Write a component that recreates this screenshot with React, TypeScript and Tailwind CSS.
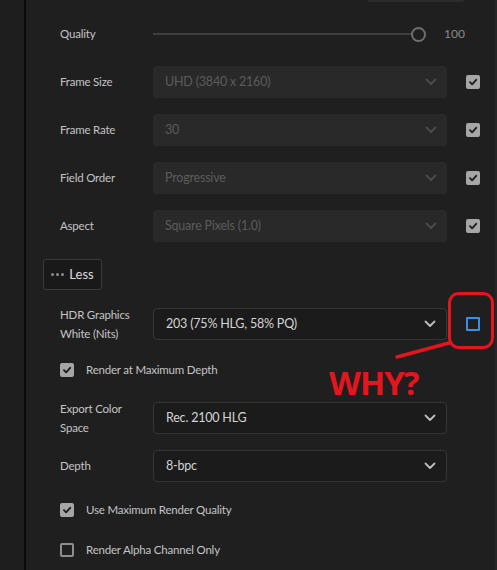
import React from 'react';

const font = { fontFamily: 'Lato, "Noto Sans", sans-serif' };

function Chevron({ enabled }: { enabled?: boolean }) {
  return (
    <svg width="12" height="8" viewBox="0 0 12 8" className="shrink-0">
      <path
        d="M1.5 1.5 L6 6 L10.5 1.5"
        fill="none"
        stroke={enabled ? '#bdbdbd' : '#4c4c4c'}
        strokeWidth="1.8"
        strokeLinecap="round"
        strokeLinejoin="round"
      />
    </svg>
  );
}

function CheckBox({ checked }: { checked: boolean }) {
  if (!checked) {
    return <div className="w-[14px] h-[14px] rounded-[2px] border-2 border-[#8e8e8e] shrink-0" />;
  }
  return (
    <div className="w-[14px] h-[14px] rounded-[2px] bg-[#a6a6a6] flex items-center justify-center shrink-0">
      <svg width="10" height="10" viewBox="0 0 10 10">
        <path d="M2 5.2 L4.1 7.3 L8.2 2.8" fill="none" stroke="#1e1e1e" strokeWidth="1.9" strokeLinecap="round" strokeLinejoin="round" />
      </svg>
    </div>
  );
}

// greyed-out selects of the top block, each with its "match source" box
function DisabledRow({ label, value }: { label: string; value: string }) {
  return (
    <div className="flex items-center h-8 pl-[17px]">
      <div className="w-[93px] text-[11.5px] tracking-[-0.2px] text-[#c4c4c4]">{label}</div>
      <div className="w-[294px] h-8 rounded-[4px] bg-[#292929] flex items-center justify-between pl-3 pr-[10px]">
        <span className="text-[12.5px] tracking-[-0.2px] text-[#5c5c5c]">{value}</span>
        <Chevron />
      </div>
      <div className="ml-[19px]">
        <CheckBox checked />
      </div>
    </div>
  );
}

function ActiveRow({ label, value, twoLine }: { label: string[]; value: string; twoLine?: boolean }) {
  return (
    <div className="flex items-center h-8 pl-[17px]">
      <div className={`w-[93px] text-[11.5px] tracking-[-0.2px] text-[#c4c4c4] ${twoLine ? 'leading-[19px]' : ''}`}>
        {label.map((l) => (
          <div key={l}>{l}</div>
        ))}
      </div>
      <div className="w-[294px] h-8 rounded-[4px] bg-[#1b1b1b] border border-[#353535] flex items-center justify-between pl-3 pr-[10px]">
        <span className="text-[12.5px] tracking-[-0.2px] text-[#d4d4d4]">{value}</span>
        <Chevron enabled />
      </div>
    </div>
  );
}

function CheckRow({ label, checked }: { label: string; checked: boolean }) {
  return (
    <div className="flex items-center h-5 pl-[17px]">
      <CheckBox checked={checked} />
      <span className="ml-3 text-[11.5px] tracking-[-0.2px] text-[#c4c4c4]">{label}</span>
    </div>
  );
}

export default function App() {
  return (
    <div className="relative w-[497px] h-[570px] flex bg-[#1f1f1f] overflow-hidden" style={font}>
      <div className="w-[24px] bg-[#1e1e1e]" />
      <div className="w-[2px] bg-[#0b0b0b]" />
      <div className="flex-1 flex flex-col pl-[17px]">
        {/* bottom edge of a button from the section above */}
        <div className="ml-[324px] w-[97px] h-[2px] bg-[#2b2b2b] rounded-b-[3px]" />

        {/* Quality */}
        <div className="flex items-center h-8 pl-[17px] mt-[16px]">
          <div className="w-[93px] text-[11.5px] tracking-[-0.2px] text-[#c4c4c4]">Quality</div>
          <div className="w-[259px] h-[2px] bg-[#3e3e3e]" />
          <div className="w-[15px] h-[15px] -ml-[1px] rounded-full border-2 border-[#6e6e6e] bg-[#1f1f1f]" />
          <span className="ml-[18px] text-[12px] text-[#8a8a8a]">100</span>
        </div>

        <div className="mt-4">
          <DisabledRow label="Frame Size" value="UHD (3840 x 2160)" />
        </div>
        <div className="mt-4">
          <DisabledRow label="Frame Rate" value="30" />
        </div>
        <div className="mt-4">
          <DisabledRow label="Field Order" value="Progressive" />
        </div>
        <div className="mt-4">
          <DisabledRow label="Aspect" value="Square Pixels (1.0)" />
        </div>

        <div className="mt-[17px]">
          <button className="h-[31px] w-[59px] rounded-[3px] border border-[#3a3a3a] bg-[#191919] flex items-center justify-center gap-[5px]">
            <span className="flex gap-[2px]">
              <span className="w-[3px] h-[3px] rounded-full bg-[#8a8a8a]" />
              <span className="w-[3px] h-[3px] rounded-full bg-[#8a8a8a]" />
              <span className="w-[3px] h-[3px] rounded-full bg-[#8a8a8a]" />
            </span>
            <span className="text-[13px] text-[#dcdcdc]">Less</span>
          </button>
        </div>

        <div className="mt-[18px] flex items-center">
          <ActiveRow label={['HDR Graphics', 'White (Nits)']} value="203 (75% HLG, 58% PQ)" twoLine />
          <div className="ml-[19px] w-[14px] h-[14px] border-2 border-[#3d8ee6] rounded-[1px]" />
        </div>

        <div className="mt-[20px]">
          <CheckRow label="Render at Maximum Depth" checked />
        </div>

        <div className="mt-[22px]">
          <ActiveRow label={['Export Color', 'Space']} value="Rec. 2100 HLG" twoLine />
        </div>
        <div className="mt-4">
          <ActiveRow label={['Depth']} value="8-bpc" />
        </div>

        <div className="mt-[18px]">
          <CheckRow label="Use Maximum Render Quality" checked />
        </div>
        <div className="mt-[20px]">
          <CheckRow label="Render Alpha Channel Only" checked={false} />
        </div>
      </div>
      <div className="w-[2px] bg-[#262626]" />

      {/* red annotation */}
      <div className="absolute left-[448px] top-[292px] w-[46px] h-[57px] rounded-[11px] border-[3px] border-[#e3151d]" />
      <svg className="absolute left-0 top-0 pointer-events-none" width="497" height="570">
        <line x1="397" y1="357" x2="449" y2="343" stroke="#e3151d" strokeWidth="3.5" strokeLinecap="round" />
      </svg>
      <div
        className="absolute left-[329px] top-[366px] text-[33px] font-bold leading-none text-[#e3151d] tracking-[-1px]"
        style={{ fontFamily: '"Open Sans", "Noto Sans", sans-serif' }}
      >
        WHY?
      </div>
    </div>
  );
}
